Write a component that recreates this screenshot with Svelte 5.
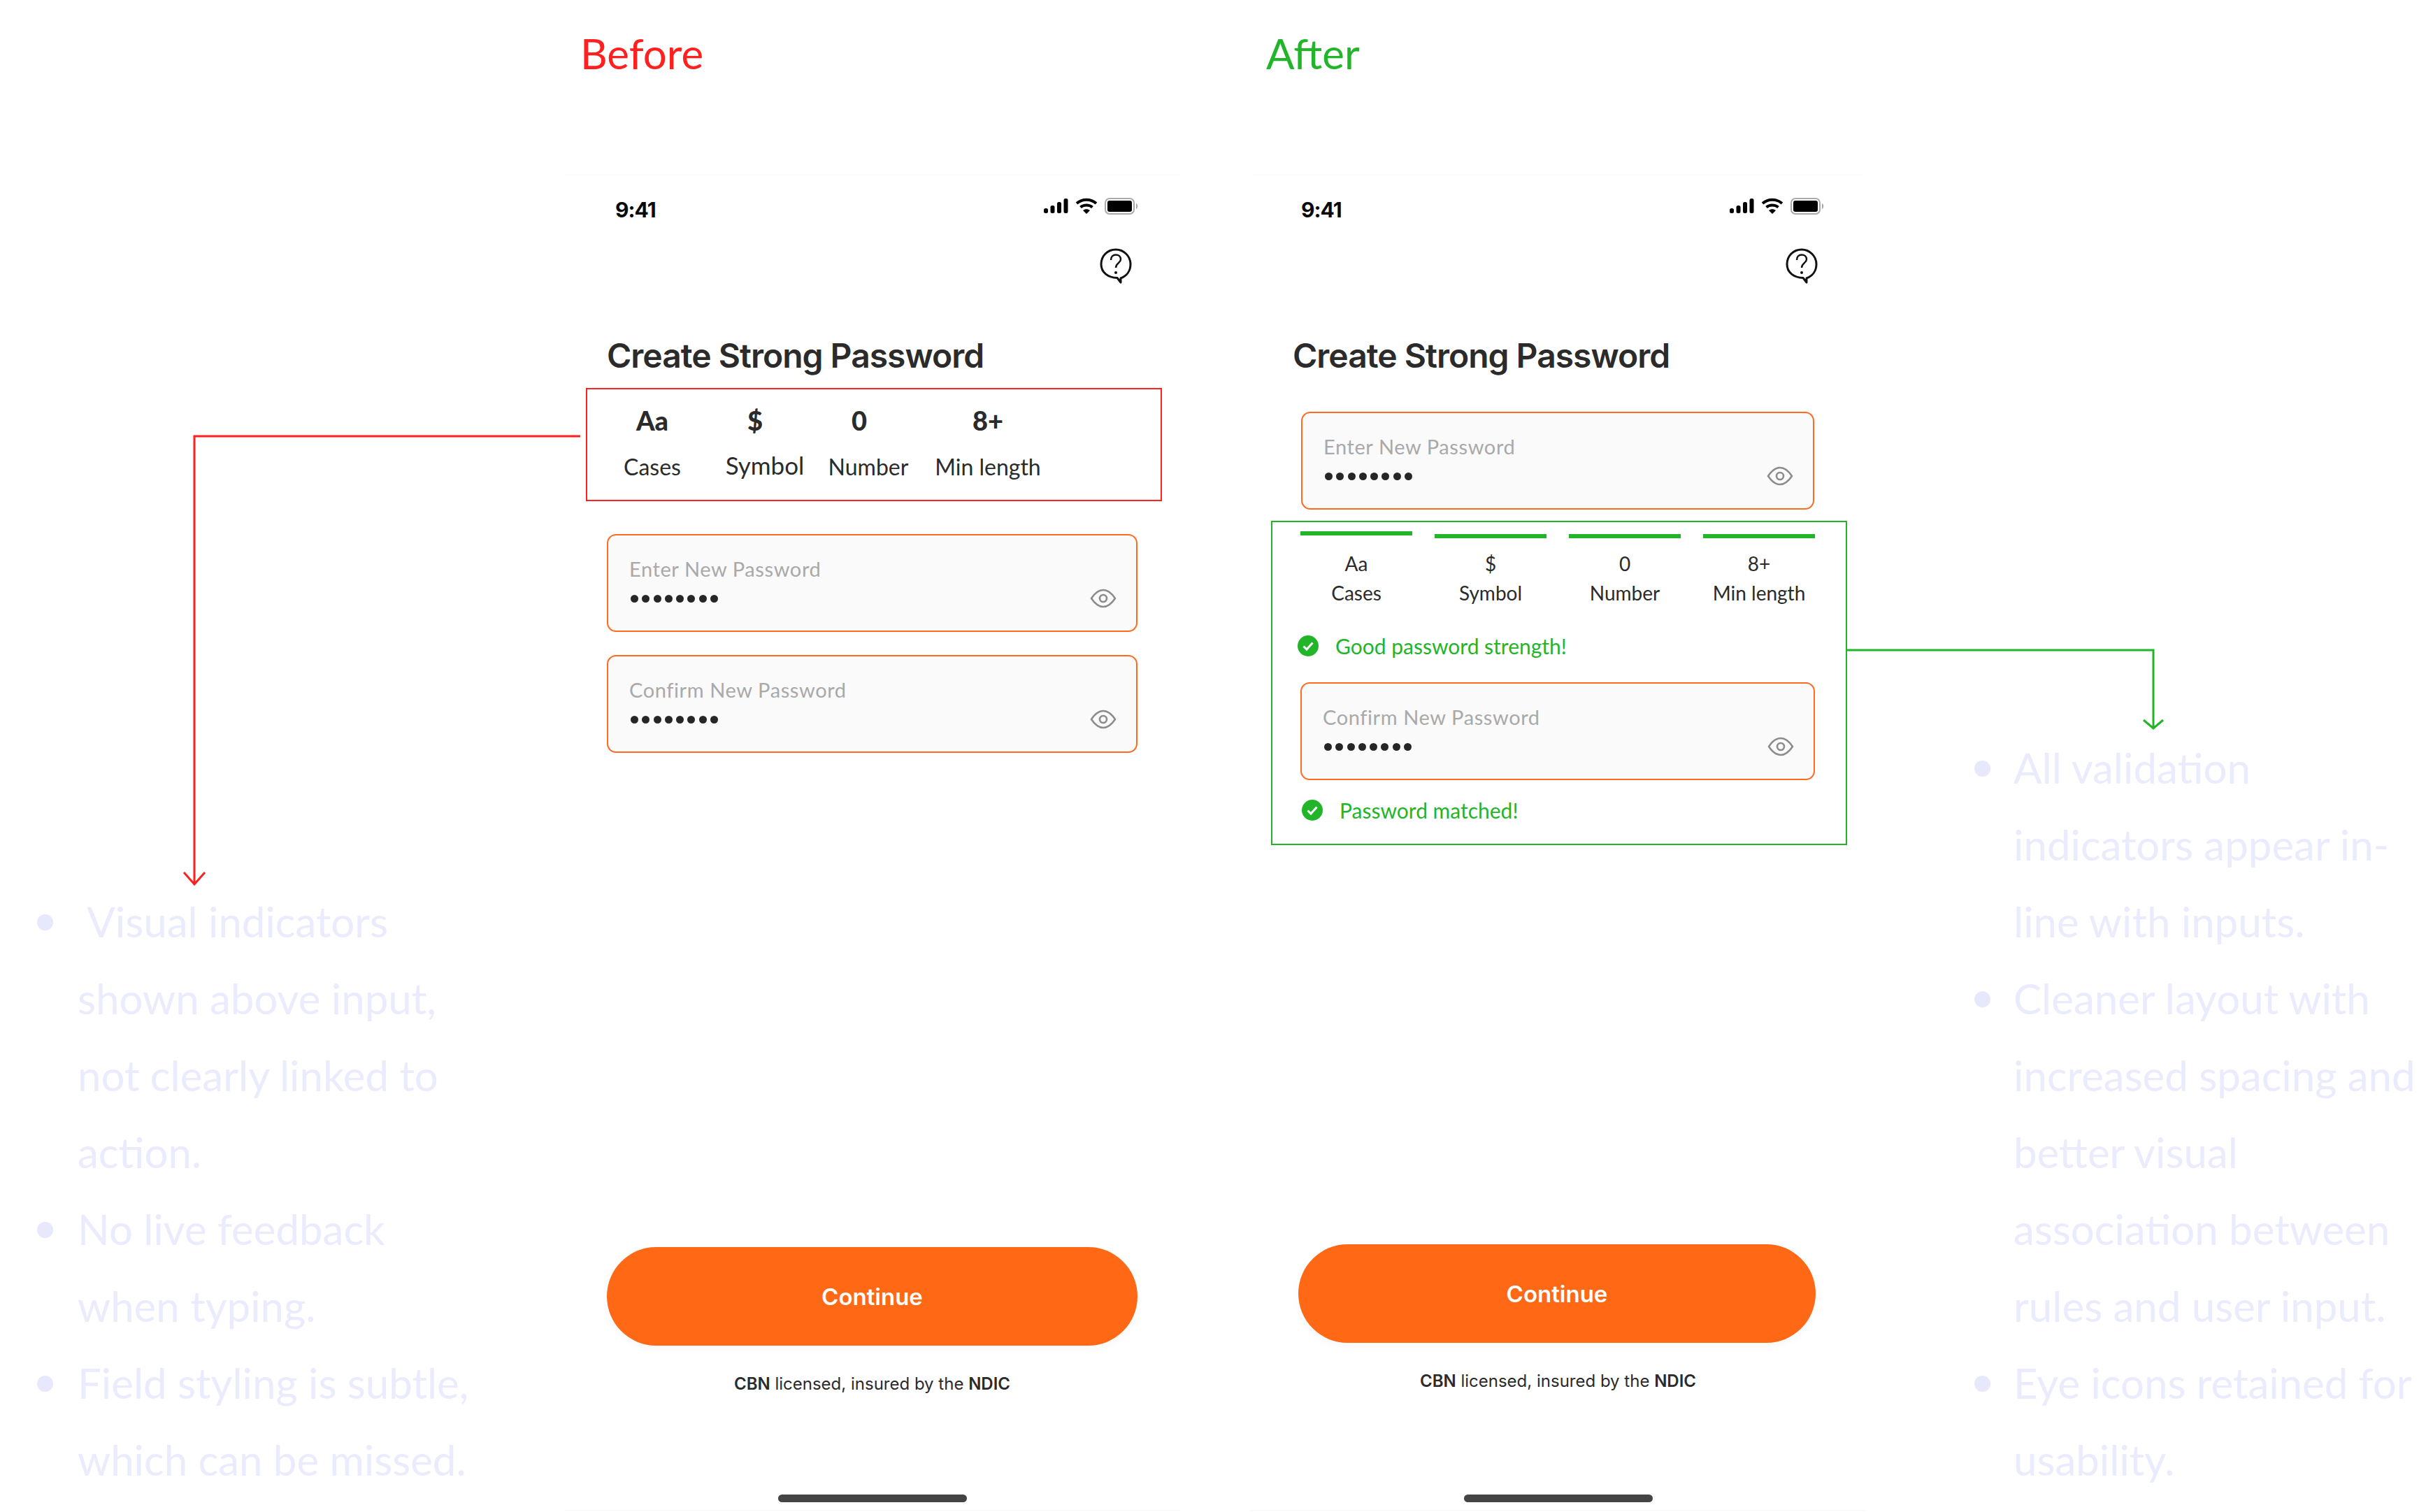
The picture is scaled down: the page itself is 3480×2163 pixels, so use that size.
<script>
    const rules = [
        { value: "Aa", label: "Cases" },
        { value: "$", label: "Symbol" },
        { value: "0", label: "Number" },
        { value: "8+", label: "Min length" },
    ]

    const beforeNotes = [
        "\u00a0Visual indicators shown above input, not clearly linked to action.",
        "No live feedback when typing.",
        "Field styling is subtle, which can be missed.",
    ]

    const afterNotes = [
        "All validation indicators appear in-line with inputs.",
        "Cleaner layout with increased spacing and better visual association between rules and user input.",
        "Eye icons retained for usability.",
    ]

    const dots = [0, 1, 2, 3, 4, 5, 6, 7]
</script>

{#snippet statusBar()}
    <div class="status">
        <span class="time">9:41</span>
        <div class="status-icons">
            <svg width="35" height="22" viewBox="0 0 35 22">
                <rect x="0" y="14" width="6" height="7" rx="2.5" />
                <rect x="9.5" y="10" width="6" height="11" rx="2.5" />
                <rect x="19" y="5" width="6" height="16" rx="2.5" />
                <rect x="28.5" y="0" width="6" height="21" rx="2.5" />
            </svg>
            <svg width="32" height="24" viewBox="0 0 32 24">
                <path d="M2 8 C10 1 22 1 30 8" fill="none" stroke="#000" stroke-width="4" />
                <path d="M7.5 13.5 C12 9.5 20 9.5 24.5 13.5" fill="none" stroke="#000" stroke-width="4" />
                <path d="M11 18 C14 15.500 18 15.500 21 18 L16 23 Z" />
            </svg>
            <svg width="50" height="24" viewBox="0 0 50 24">
                <rect x="1" y="1" width="41" height="22" rx="6" fill="none" stroke="#aaa" stroke-width="2" />
                <rect x="4" y="4" width="35" height="16" rx="3" />
                <path d="M45 8 C48 9 48 15 45 16 Z" fill="#aaa" />
            </svg>
        </div>
    </div>
    <div class="help-row">
        <svg width="46" height="51" viewBox="0 0 46 51" fill="none" stroke="#111" stroke-width="3">
            <path d="M30 43 C38 40 44 33 44 23 C44 11 34 2 23 2 C11 2 2 11 2 23 C2 35 12 42 25 42.500 L30 49 Z" stroke-linejoin="round" />
            <path d="M16 17 C16 12 19 9.500 23 9.500 C27 9.500 30 12 30 16 C30 21 23 21.500 23 28" stroke-width="2.500" />
            <circle cx="23" cy="35" r="2" fill="#111" stroke="none" />
        </svg>
    </div>
    <h1 class="title">Create Strong Password</h1>
{/snippet}

{#snippet field(label)}
    <div class="field">
        <div class="field-text">
            <span class="placeholder">{label}</span>
            <div class="dots">
                {#each dots as d (d)}
                    <i></i>
                {/each}
            </div>
        </div>
        <svg class="eye" width="38" height="28" viewBox="0 0 38 28" fill="none" stroke="#8c8c8c" stroke-width="2.600">
            <path d="M2 14 C8 5 14 2 19 2 C24 2 30 5 36 14 C30 23 24 26 19 26 C14 26 8 23 2 14 Z" stroke-linejoin="round" />
            <circle cx="19" cy="14" r="5" />
        </svg>
    </div>
{/snippet}

{#snippet good(text, cls)}
    <div class="good {cls}">
        <svg width="30" height="30" viewBox="0 0 30 30">
            <circle cx="15" cy="15" r="15" fill="#22b52a" />
            <path d="M8.500 15.500 L13 20 L21.500 10.500" fill="none" stroke="#fff" stroke-width="3" />
        </svg>
        <span>{text}</span>
    </div>
{/snippet}

{#snippet bottom(cls)}
    <div class="bottom {cls}">
        <button class="continue">Continue</button>
        <p class="license"><b>CBN</b> licensed, insured by the <b>NDIC</b></p>
        <div class="home"></div>
    </div>
{/snippet}

<div class="board">
    <ul class="notes notes-before">
        {#each beforeNotes as note}
            <li>{note}</li>
        {/each}
    </ul>

    <section class="column">
        <h2 class="heading before">Before</h2>
        <div class="phone">
            {@render statusBar()}
            <div class="box-red">
                {#each rules as rule}
                    <div class="old-rule">
                        <b>{rule.value}</b>
                        <span>{rule.label}</span>
                    </div>
                {/each}
            </div>
            <div class="fields-before">
                {@render field("Enter New Password")}
                {@render field("Confirm New Password")}
            </div>
            {@render bottom("")}
        </div>
    </section>

    <section class="column">
        <h2 class="heading after">After</h2>
        <div class="phone">
            {@render statusBar()}
            <div class="first-field">
                {@render field("Enter New Password")}
            </div>
            <div class="box-green">
                <div class="rules">
                    {#each rules as rule}
                        <div class="rule">
                            <div class="bar"></div>
                            <div class="rule-value">{rule.value}</div>
                            <div class="rule-label">{rule.label}</div>
                        </div>
                    {/each}
                </div>
                {@render good("Good password strength!", "strength")}
                {@render field("Confirm New Password")}
                {@render good("Password matched!", "matched")}
            </div>
            {@render bottom("bottom-after")}
        </div>
    </section>

    <ul class="notes notes-after">
        {#each afterNotes as note}
            <li>{note}</li>
        {/each}
    </ul>

    <!-- connectors between the annotated boxes and their notes -->
    <svg class="arrows" width="3480" height="2163" fill="none" stroke-width="3">
        <path d="M830 624 H278 V1265 M263 1248 L278 1265 L293 1248" stroke="#ff2020" />
        <path d="M2642 930 H3080 V1042 M3066 1030 L3080 1042 L3094 1030" stroke="#22b52a" />
    </svg>
</div>

<style>
    :global(body) {
        margin: 0;
        background: #fff;
    }

    .board {
        position: relative;
        width: 3480px;
        height: 2163px;
        overflow: hidden;
        display: grid;
        grid-template-columns: 808px 981px 879px 1fr;
        font-family: "Lato", sans-serif;
    }

    .notes {
        list-style: none;
        margin: 0;
        padding: 0;
        font-size: 60px;
        line-height: 110px;
        color: #ebebfe;
    }
    .notes li {
        position: relative;
    }
    .notes li::before {
        content: "";
        position: absolute;
        top: 45px;
        left: -58px;
        width: 23px;
        height: 23px;
        border-radius: 50%;
        background: #e8e8fd;
    }
    .notes-before {
        margin: 1263px 0 0 111px;
        width: 580px;
    }
    .notes-after {
        margin: 1043px 0 0 212px;
        width: 600px;
    }
    .notes-after li::before {
        left: -56px;
    }

    .column {
        display: flex;
        flex-direction: column;
    }
    .heading {
        margin: 0;
        height: 250px;
        padding: 34px 0 0 22px;
        box-sizing: border-box;
        font-size: 60px;
        line-height: 84px;
        font-weight: 400;
    }
    .heading.before {
        color: #ff2020;
    }
    .heading.after {
        color: #22b52a;
    }

    .phone {
        width: 879px;
        height: 1911px;
        box-sizing: border-box;
        padding: 0 60px;
        display: flex;
        flex-direction: column;
        border-top: 1px solid #fafafa;
        border-bottom: 1px solid #f6f6fb;
        font-family: "Inter", sans-serif;
    }

    .status {
        margin-top: 31px;
        height: 32px;
        padding: 0 0 0 12px;
        display: flex;
        align-items: center;
        justify-content: space-between;
    }
    .time {
        margin-top: 3px;
        font-size: 30px;
        font-weight: 700;
        color: #0a0a0a;
        letter-spacing: -1px;
    }
    .status-icons {
        display: flex;
        align-items: center;
        gap: 10px;
        margin: 0 -3px 7px 0;
    }
    .help-row {
        margin-top: 41px;
        height: 51px;
        padding-right: 8px;
        display: flex;
        justify-content: flex-end;
    }
    .title {
        margin: 73px 0 0 0;
        font-size: 48px;
        line-height: 60px;
        font-weight: 600;
        letter-spacing: -1px;
        color: #2b2b2b;
    }

    .box-red {
        margin: 16px -35px 0 -30px;
        height: 162px;
        box-sizing: border-box;
        border: 2.500px solid #ff2020;
        position: relative;
        font-family: "Lato", sans-serif;
        color: #2b2b2b;
    }
    .old-rule {
        position: absolute;
        top: 22px;
        display: flex;
        flex-direction: column;
        align-items: center;
        transform: translateX(-50%);
        white-space: nowrap;
    }
    .old-rule:nth-child(1) { left: 93px; }
    .old-rule:nth-child(2) { left: 254px; }
    .old-rule:nth-child(3) { left: 402px; }
    .old-rule:nth-child(4) { left: 573px; }
    .old-rule b {
        font-size: 38px;
        line-height: 44px;
        font-weight: 900;
    }
    .old-rule:nth-child(2) b {
        margin-right: 28px;
    }
    .old-rule:nth-child(3) b {
        margin-right: 26px;
    }
    .old-rule span {
        margin-top: 23px;
        font-size: 32px;
        line-height: 44px;
    }
    .old-rule:nth-child(2) span {
        font-size: 35px;
        margin-top: 20px;
    }

    .fields-before {
        margin-top: 47px;
        display: flex;
        flex-direction: column;
        gap: 33px;
    }
    .first-field {
        margin: 50px 13px 0 12px;
    }

    .field {
        height: 140px;
        box-sizing: border-box;
        border: 2.500px solid #ff6b1f;
        border-radius: 13px;
        background: #fafafa;
        padding: 0 28px 0 30px;
        display: flex;
        align-items: center;
        justify-content: space-between;
    }
    .field-text {
        display: flex;
        flex-direction: column;
        margin-bottom: 10px;
    }
    .placeholder {
        font-family: "Lato", sans-serif;
        font-size: 29px;
        line-height: 36px;
        letter-spacing: 0.6px;
        color: #a9a9a9;
    }
    .dots {
        margin: 19px 0 0 2px;
        display: flex;
        gap: 5.300px;
    }
    .dots i {
        width: 11px;
        height: 11px;
        border-radius: 50%;
        background: #262626;
    }
    .eye {
        margin-top: 43px;
        flex: none;
    }

    .box-green {
        margin: 16px -34px 0 -31px;
        box-sizing: border-box;
        height: 464px;
        padding: 13px 44px 0 40px;
        border: 2.500px solid #22b52a;
        display: flex;
        flex-direction: column;
        font-family: "Lato", sans-serif;
    }
    .rules {
        display: grid;
        grid-template-columns: repeat(4, 1fr);
        column-gap: 32px;
    }
    .rule {
        text-align: center;
        color: #2b2b2b;
        font-size: 28px;
        line-height: 42px;
    }
    .bar {
        height: 6px;
        margin: 4px 0 15px;
        background: #22b52a;
    }
    .rule:first-child .bar {
        margin: 0 0 19px;
    }
    .good {
        display: flex;
        align-items: center;
        height: 40px;
        color: #22b52a;
        font-size: 30px;
    }
    .strength {
        margin: 35px 0 32px -4px;
        gap: 24px;
    }
    .matched {
        margin: 23px 0 0 2px;
        gap: 24px;
    }

    .bottom {
        margin-top: auto;
        display: flex;
        flex-direction: column;
        align-items: center;
    }
    .continue {
        align-self: stretch;
        height: 141px;
        border: none;
        border-radius: 71px;
        background: #ff6815;
        color: #fff;
        font-family: "Inter", sans-serif;
        font-size: 33px;
        font-weight: 600;
        box-shadow: 0 4px 14px rgba(0, 0, 0, 0.03);
    }
    .license {
        margin: 40px 0 143px;
        font-size: 24px;
        line-height: 30px;
        color: #2b2b2b;
    }
    .license b {
        font-weight: 600;
    }
    .home {
        width: 270px;
        height: 11px;
        margin-bottom: 11px;
        border-radius: 6px;
        background: #444;
    }
    .bottom-after .continue {
        margin: 0 11px 0 8px;
    }
    .bottom-after .license {
        margin-bottom: 147px;
    }

    .arrows {
        position: absolute;
        left: 0;
        top: 0;
        pointer-events: none;
    }
</style>
